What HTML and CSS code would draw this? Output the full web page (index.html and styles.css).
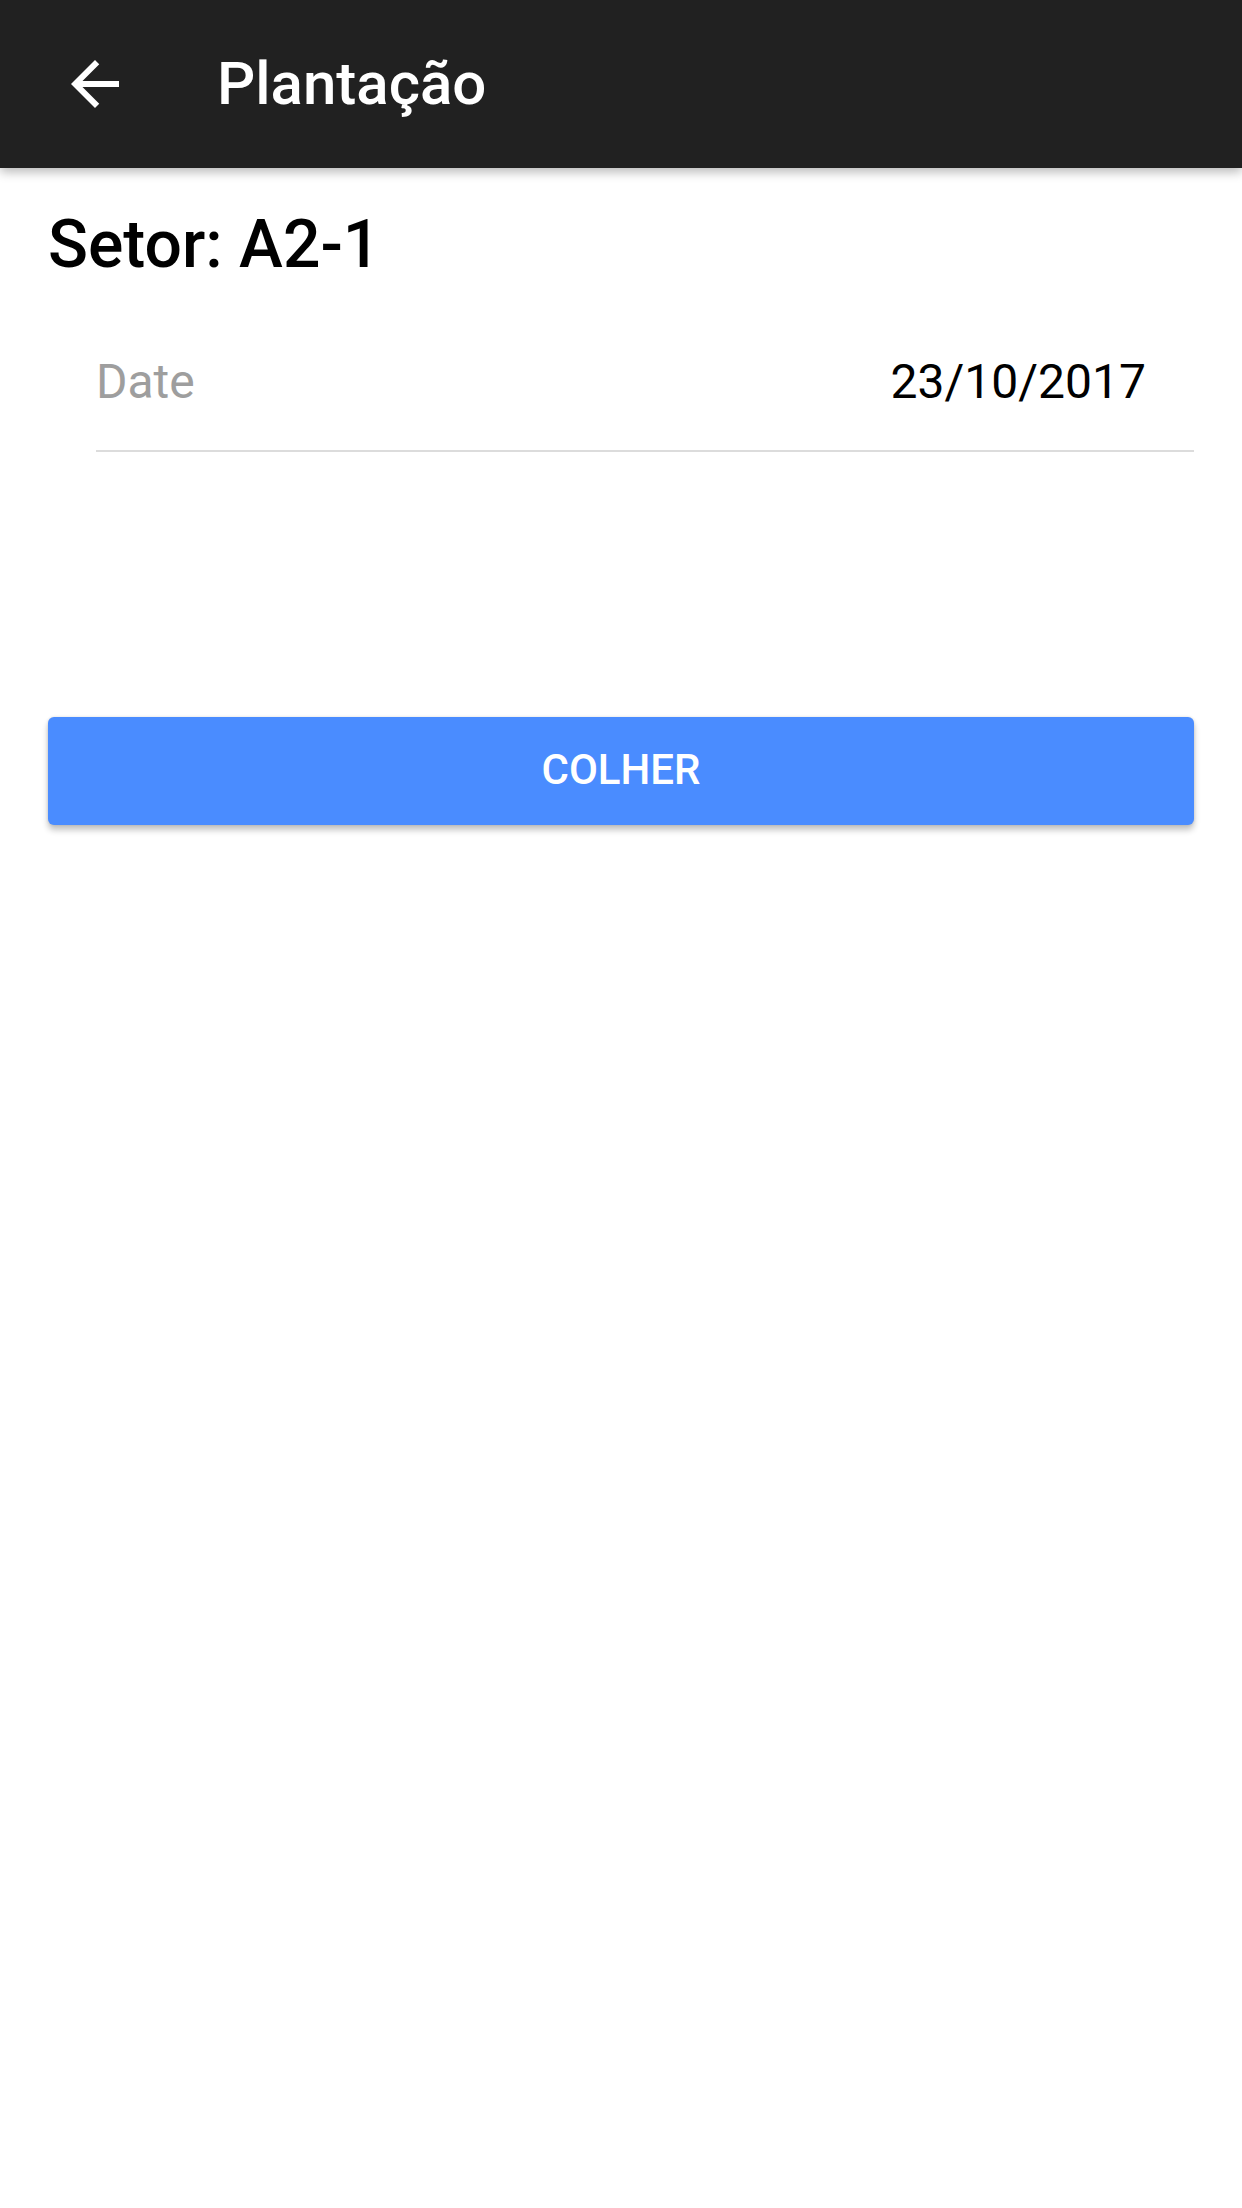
FILE: index.html
```html
<!DOCTYPE html>
<html lang="pt">
<head>
<meta charset="utf-8">
<title>Plantação</title>
<link rel="stylesheet" href="styles.css">
</head>
<body>
<header class="toolbar">
  <span class="nav-icon">
    <svg viewBox="0 0 24 24" width="72" height="72"><path fill="#fff" d="M20 11H7.83l5.59-5.59L12 4l-8 8 8 8 1.41-1.41L7.83 13H20v-2z"/></svg>
  </span>
  <h1 class="title">Plantação</h1>
</header>
<main class="content">
  <h2 class="sector">Setor: A2-1</h2>
  <div class="field">
    <span class="field-label">Date</span>
    <span class="field-value">23/10/2017</span>
  </div>
  <button class="btn">COLHER</button>
</main>
</body>
</html>
```
FILE: styles.css
```css
html, body {
  margin: 0;
  padding: 0;
  background: #ffffff;
}
body {
  font-family: Roboto, "Noto Sans", sans-serif;
  width: 1242px;
  min-height: 2208px;
}
.toolbar {
  height: 168px;
  background: #212121;
  display: flex;
  align-items: center;
  padding-left: 59px;
  box-shadow: 0 4px 10px rgba(0,0,0,0.28);
  position: relative;
  z-index: 1;
}
.nav-icon {
  width: 72px;
  height: 72px;
  display: block;
}
.nav-icon svg { display: block; }
.title {
  margin: 0 0 0 86px;
  font-size: 60px;
  font-weight: 500;
  color: #ffffff;
  line-height: 1;
}
.content {
  padding: 0 48px;
  display: flex;
  flex-direction: column;
}
.sector {
  margin: 38px 0 0 0;
  font-size: 66px;
  font-weight: 500;
  color: #000;
  line-height: 77px;
}
.field {
  margin: 47px 0 0 48px;
  padding: 24px 48px 40px 0;
  border-bottom: 2px solid #dcdcdc;
  display: flex;
  justify-content: space-between;
  align-items: baseline;
  font-size: 48px;
  line-height: 56px;
}
.field-label { color: #9e9e9e; }
.field-value { color: #000; }
.btn {
  margin-top: 265px;
  height: 108px;
  border: none;
  border-radius: 6px;
  background: #4a8cff;
  color: #fff;
  font-family: Roboto, "Noto Sans", sans-serif;
  font-size: 42px;
  font-weight: 500;
  padding: 0 0 4px 0;
  box-shadow: 0 5px 6px rgba(0,0,0,0.24), 0 0 3px rgba(0,0,0,0.12);
}
```
